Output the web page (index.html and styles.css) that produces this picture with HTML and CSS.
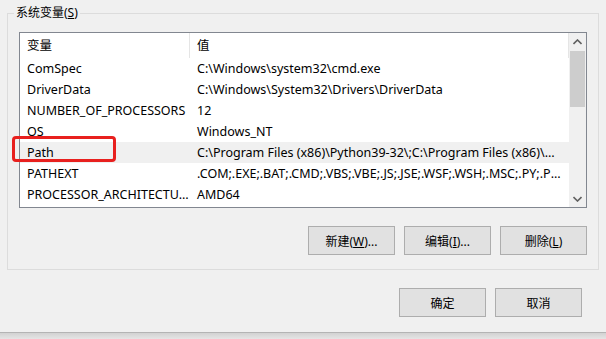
FILE: index.html
```html
<!DOCTYPE html>
<html lang="zh-CN">
<head>
    <meta charset="UTF-8">
    <title>系统变量</title>
    <link rel="stylesheet" href="styles.css">
</head>
<body>
    <div class="dialog">
        <fieldset class="group">
            <legend>系统变量(<u>S</u>)</legend>
            <div class="listbox">
                <div class="list">
                    <div class="row header">
                        <div class="cell name">变量</div>
                        <div class="cell value">值</div>
                    </div>
                    <div class="row"><div class="cell name">ComSpec</div><div class="cell value">C:\Windows\system32\cmd.exe</div></div>
                    <div class="row"><div class="cell name">DriverData</div><div class="cell value">C:\Windows\System32\Drivers\DriverData</div></div>
                    <div class="row"><div class="cell name">NUMBER_OF_PROCESSORS</div><div class="cell value">12</div></div>
                    <div class="row"><div class="cell name">OS</div><div class="cell value">Windows_NT</div></div>
                    <div class="row selected"><div class="cell name">Path</div><div class="cell value">C:\Program Files (x86)\Python39-32\;C:\Program Files (x86)\Python39-32\Scripts\;C:\Windows\system32</div></div>
                    <div class="row"><div class="cell name">PATHEXT</div><div class="cell value">.COM;.EXE;.BAT;.CMD;.VBS;.VBE;.JS;.JSE;.WSF;.WSH;.MSC;.PY;.PYW</div></div>
                    <div class="row"><div class="cell name">PROCESSOR_ARCHITECTURE</div><div class="cell value">AMD64</div></div>
                </div>
                <div class="scrollbar">
                    <div class="arrow">
                        <svg width="9" height="6" viewBox="0 0 9 6"><path d="M0.5 5 L4.5 1 L8.5 5" fill="none" stroke="#606060" stroke-width="1.6"/></svg>
                    </div>
                    <div class="track"><div class="thumb"></div></div>
                    <div class="arrow">
                        <svg width="9" height="6" viewBox="0 0 9 6"><path d="M0.5 1 L4.5 5 L8.5 1" fill="none" stroke="#606060" stroke-width="1.6"/></svg>
                    </div>
                </div>
            </div>
            <div class="actions">
                <button class="btn">新建(<u>W</u>)...</button>
                <button class="btn">编辑(<u>I</u>)...</button>
                <button class="btn">删除(<u>L</u>)</button>
            </div>
        </fieldset>
        <div class="footer">
            <button class="btn">确定</button>
            <button class="btn">取消</button>
        </div>
        <div class="marker"></div>
    </div>
    <div class="below"></div>
</body>
</html>
```

FILE: styles.css
```css
body {
    margin: 0;
    background: #f0f0f0;
    font-family: "Noto Sans", "Noto Sans CJK SC", sans-serif;
    font-size: 12px;
    color: #000;
    overflow: hidden;
}

.dialog {
    position: relative;
    height: 332px;
    background: #f0f0f0;
    border-bottom: 1px solid #b4b4b4;
}

.group {
    margin: 0 7px 0 7px;
    position: relative;
    top: 6px;
    height: 264px;
    min-width: 0;
    padding: 0 11px;
    border: 1px solid #dcdcdc;
    box-sizing: border-box;
}

.group legend {
    margin-left: -5px;
    padding: 0 2px;
    line-height: 14px;
}

.listbox {
    margin-top: 12px;
    height: 176px;
    border: 1px solid #828790;
    background: #fff;
    display: flex;
    box-sizing: border-box;
}

.list {
    flex: 1;
    min-width: 0;
    display: flex;
    flex-direction: column;
    font-size: 12.5px;
}

.row {
    display: flex;
    height: 21px;
    min-width: 0;
    align-items: center;
    flex-shrink: 0;
}

.row.header {
    height: 25px;
    border-right: 1px solid #e5e5e5;
}

.row.selected {
    background: #f0f0f0;
}

.cell {
    white-space: nowrap;
    overflow: hidden;
    text-overflow: ellipsis;
}

.cell.name {
    width: 170px;
    flex-shrink: 0;
    padding: 0 1px 0 7px;
    box-sizing: border-box;
}

.cell.value {
    flex: 1;
    min-width: 0;
    padding: 0 7px;
}

.header .cell {
    height: 25px;
    line-height: 25px;
}

.header .cell.name {
    border-right: 1px solid #e5e5e5;
}

.scrollbar {
    width: 17px;
    flex-shrink: 0;
    background: #f0f0f0;
    display: flex;
    flex-direction: column;
}

.arrow {
    height: 17px;
    display: flex;
    align-items: center;
    justify-content: center;
}

.track {
    flex: 1;
    padding: 1px 1px 0 1px;
}

.thumb {
    height: 56px;
    background: #cdcdcd;
}

.actions {
    display: flex;
    justify-content: flex-end;
    gap: 9px;
    margin-top: 18px;
}

.btn {
    width: 87px;
    height: 29px;
    border: 1px solid #adadad;
    background: #e1e1e1;
    font-family: inherit;
    font-size: 12px;
    color: #000;
    padding: 0;
}

.footer {
    display: flex;
    justify-content: flex-end;
    gap: 9px;
    margin: 24px 24px 0 0;
}

.marker {
    position: absolute;
    left: 12px;
    top: 136px;
    width: 104px;
    height: 26px;
    border: 3px solid #e8201e;
    border-radius: 4px;
    box-sizing: border-box;
}

.below {
    height: 7px;
    background: linear-gradient(#d2d2d2, #e8e8e8);
}
```
